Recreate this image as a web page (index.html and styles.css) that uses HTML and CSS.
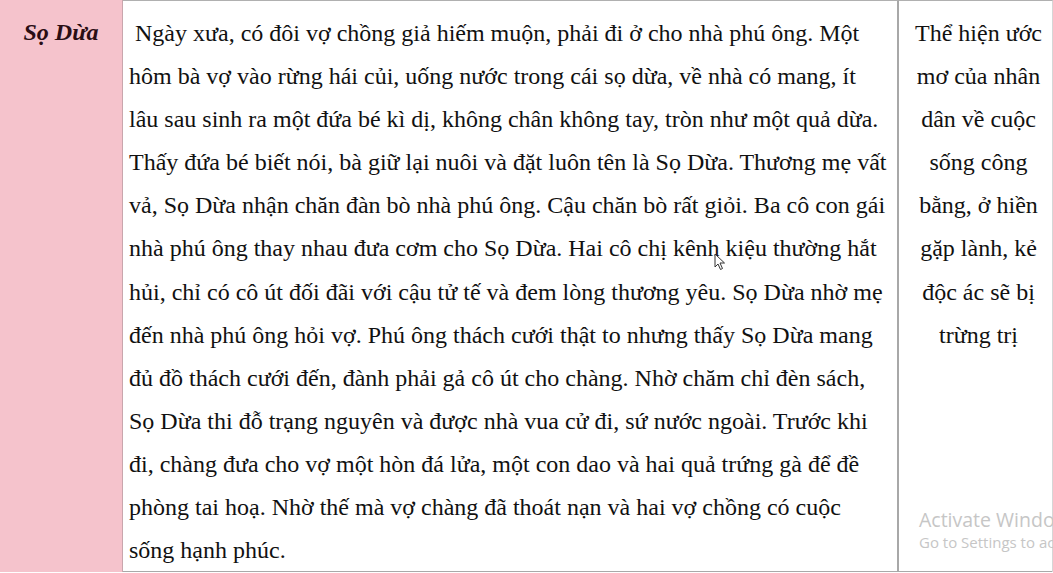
FILE: index.html
```html
<!DOCTYPE html>
<html lang="vi">
<head>
<meta charset="utf-8">
<link rel="stylesheet" href="styles.css">
</head>
<body>
<div class="table">
  <div class="cell name"><strong><em>Sọ Dừa</em></strong></div>
  <div class="cell story"><p>&nbsp;Ngày xưa, có đôi vợ chồng giả hiếm muộn, phải đi ở cho nhà phú ông. Một hôm bà vợ vào rừng hái củi, uống nước trong cái sọ dừa, về nhà có mang, ít lâu sau sinh ra một đứa bé kì dị, không chân không tay, tròn như một quả dừa. Thấy đứa bé biết nói, bà giữ lại nuôi và đặt luôn tên là Sọ Dừa. Thương mẹ vất vả, Sọ Dừa nhận chăn đàn bò nhà phú ông. Cậu chăn bò rất giỏi. Ba cô con gái nhà phú ông thay nhau đưa cơm cho Sọ Dừa. Hai cô chị kênh kiệu thường hắt hủi, chỉ có cô út đối đãi với cậu tử tế và đem lòng thương yêu. Sọ Dừa nhờ mẹ đến nhà phú ông hỏi vợ. Phú ông thách cưới thật to nhưng thấy Sọ Dừa mang đủ đồ thách cưới đến, đành phải gả cô út cho chàng. Nhờ chăm chỉ đèn sách, Sọ Dừa thi đỗ trạng nguyên và được nhà vua cử đi, sứ nước ngoài. Trước khi đi, chàng đưa cho vợ một hòn đá lửa, một con dao và hai quả trứng gà để đề phòng tai hoạ. Nhờ thế mà vợ chàng đã thoát nạn và hai vợ chồng có cuộc sống hạnh phúc.</p></div>
  <div class="cell meaning"><p>Thể hiện ước mơ của nhân dân về cuộc sống công bằng, ở hiền gặp lành, kẻ độc ác sẽ bị trừng trị</p></div>
</div>
<svg class="cursor" width="12" height="18" viewBox="0 0 12 18"><path d="M1 1 L1 14 L4 11 L6.5 16.5 L8.5 15.5 L6 10 L10.5 10 Z" fill="#fff" stroke="#333" stroke-width="1"/></svg>
<div class="watermark">
  <div class="wm-title">Activate Windows</div>
  <div class="wm-sub">Go to Settings to activate Windows.</div>
</div>
</body>
</html>
```
FILE: styles.css
```css
html, body {
  margin: 0;
  padding: 0;
  background: #ffffff;
  overflow: hidden;
}
body {
  width: 1053px;
  height: 573px;
  position: relative;
  font-family: "Liberation Serif", "Times New Roman", serif;
  color: #111;
}
.table {
  display: grid;
  grid-template-columns: 123px 776px 154px;
  height: 572px;
  border-bottom: 1px solid #a9a9a9;
  box-sizing: border-box;
}
.cell {
  box-sizing: border-box;
  font-size: 24px;
  line-height: 43.1px;
}
.cell p { margin: 0; }
.name {
  background: #f5c3cc;
  border-right: 1px solid #c9a6ad;
  text-align: center;
  padding-top: 11px;
  color: #2a0d14;
}
.story {
  border-top: 1px solid #b0b0b0;
  border-right: 2px solid #a8a8a8;
  padding: 11px 9px 0 6px;
}
.meaning {
  border-top: 1px solid #b0b0b0;
  border-right: 1px solid #d6d6d6;
  padding: 11px 2px 0 8px;
  text-align: center;
}
.cursor {
  position: absolute;
  left: 714px;
  top: 253px;
}
.watermark {
  position: absolute;
  left: 919px;
  top: 507px;
  white-space: nowrap;
  color: #c6c6c6;
  font-family: "Open Sans", "Noto Sans", sans-serif;
}
.wm-title { font-size: 19.5px; line-height: 25px; }
.wm-sub { font-size: 15px; line-height: 21px; }
```
